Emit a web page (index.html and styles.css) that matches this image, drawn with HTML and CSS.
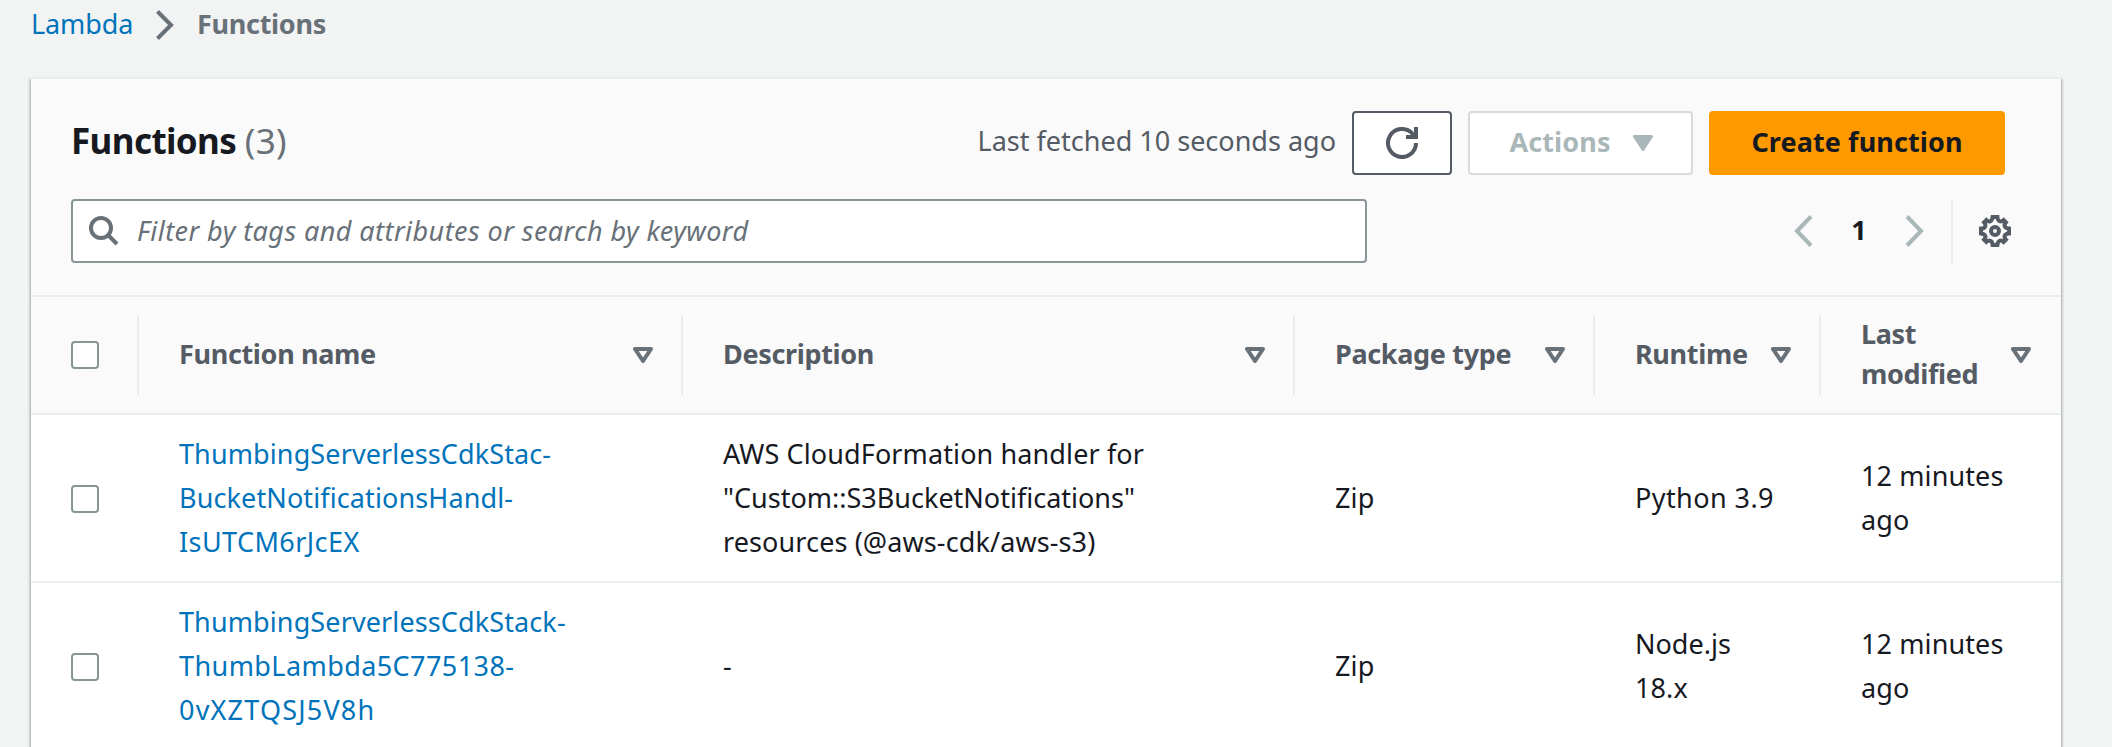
FILE: index.html
```html
<!DOCTYPE html>
<html lang="en">
<head>
<meta charset="utf-8">
<title>Functions - Lambda</title>
<link rel="stylesheet" href="styles.css">
</head>
<body>
<svg class="defs" width="0" height="0">
  <symbol id="sort" viewBox="0 0 20 16"><path d="M2 2h16L10 14z" fill="none" stroke="currentColor" stroke-width="4" stroke-linejoin="round"/></symbol>
</svg>
<nav class="crumbs">
  <a class="crumb-link">Lambda</a>
  <svg class="crumb-sep" viewBox="0 0 18 30"><path d="M1.500 1.500 15 15 1.500 28.500" fill="none" stroke="currentColor" stroke-width="4"/></svg>
  <span class="crumb-here">Functions</span>
</nav>
<main class="panel">
  <header class="head">
    <div class="title-row">
      <h1 class="title">Functions <span class="count">(3)</span></h1>
      <span class="fetched">Last fetched 10 seconds ago</span>
      <button class="btn btn-refresh" aria-label="Refresh"><svg class="icon" viewBox="0 0 32 32"><path d="M30 16a14 14 0 1 1-4-9.800L29 10M30 0v10H20" fill="none" stroke="currentColor" stroke-width="4"/></svg></button>
      <button class="btn btn-actions"><span>Actions</span><svg class="caret" viewBox="0 0 20 16"><path d="M1.500 1.500h17L10 14.500z" fill="currentColor" stroke="currentColor" stroke-width="3" stroke-linejoin="round"/></svg></button>
      <button class="btn btn-create"><span>Create function</span></button>
    </div>
    <div class="tools-row">
      <div class="search">
        <svg class="search-icon" viewBox="0 0 30 30"><circle cx="12" cy="12" r="10" fill="none" stroke="currentColor" stroke-width="4"/><path d="M19 19l9 9" stroke="currentColor" stroke-width="4"/></svg>
        <span class="placeholder">Filter by tags and attributes or search by keyword</span>
      </div>
      <div class="pager">
        <svg class="arrow" viewBox="0 0 20 32"><path d="M18 1.500 4 16l14 14.500" fill="none" stroke="currentColor" stroke-width="4"/></svg>
        <b class="page">1</b>
        <svg class="arrow" viewBox="0 0 20 32"><path d="M2 1.500 16 16 2 30.500" fill="none" stroke="currentColor" stroke-width="4"/></svg>
      </div>
      <button class="gear" aria-label="Settings"><svg class="icon" viewBox="0 0 32 32"><g fill="none" stroke="currentColor" stroke-width="4"><circle cx="16" cy="16" r="4"/><path d="M13.600 2h4.800q.2 3.400 2.200 4.200t4-1.100l2.300 2.300q-2 2.200-1.100 4t4.200 2.200v4.800q-3.400.2-4.200 2.200t1.100 4l-2.300 2.300q-2.200-2-4-1.100t-2.200 4.200h-4.800q-.2-3.400-2.200-4.200t-4 1.100l-2.300-2.300q2-2.200 1.100-4T2 18.400v-4.800q3.400-.2 4.200-2.200t-1.100-4l2.300-2.300q2.200 2 4 1.100T13.600 2z"/></g></svg></button>
    </div>
  </header>
  <div class="row row-head">
    <div class="cell"><span class="box"></span></div>
    <div class="cell"><span>Function name</span><svg class="sort"><use href="#sort"/></svg></div>
    <div class="cell"><span>Description</span><svg class="sort"><use href="#sort"/></svg></div>
    <div class="cell"><span>Package type</span><svg class="sort"><use href="#sort"/></svg></div>
    <div class="cell"><span>Runtime</span><svg class="sort"><use href="#sort"/></svg></div>
    <div class="cell"><span>Last<br>modified</span><svg class="sort"><use href="#sort"/></svg></div>
  </div>
  <div class="row">
    <div class="cell pick"><span class="box"></span></div>
    <div class="cell"><a class="fn">ThumbingServerlessCdkStac-<br>BucketNotificationsHandl-<br><span class="loose">IsUTCM6rJcEX</span></a></div>
    <div class="cell"><div>AWS CloudFormation handler for<br><span class="plain">"Custom::S3BucketNotifications"</span><br>resources (@aws-cdk/aws-s3)</div></div>
    <div class="cell">Zip</div>
    <div class="cell"><span class="loose">Python 3.9</span></div>
    <div class="cell"><div>12 minutes<br>ago</div></div>
  </div>
  <div class="row">
    <div class="cell pick"><span class="box"></span></div>
    <div class="cell"><a class="fn">ThumbingServerlessCdkStack-<br><span class="loose">ThumbLambda5C775138-</span><br><span class="looser">0vXZTQSJ5V8h</span></a></div>
    <div class="cell">-</div>
    <div class="cell">Zip</div>
    <div class="cell"><div><span class="plain">Node.js</span><br>18.x</div></div>
    <div class="cell"><div>12 minutes<br>ago</div></div>
  </div>
</main>
</body>
</html>
```

FILE: styles.css
```css
* { box-sizing: border-box; }
body { margin: 0; height: 747px; overflow: hidden; background: #f2f3f3; font: 27px/44px "Noto Sans", "Open Sans", sans-serif; color: #16191f; white-space: nowrap; }
svg { display: block; flex: none; }
.defs { position: absolute; }
.crumbs { display: flex; align-items: center; height: 77px; padding: 0 0 28px 31px; color: #687078; }
.crumb-link { color: #0073bb; width: 125px; margin-top: -1px; letter-spacing: -.1px; }
.crumb-sep { width: 18px; height: 30px; }
.crumb-here { font-weight: 700; margin: -1px 0 0 23px; letter-spacing: -.3px; }
.panel { width: 2030px; margin-left: 31px; border-top: 2px solid #eaeded; background: #fff; box-shadow: 0 2px 2px rgba(0,28,36,.3), 2px 2px 2px rgba(0,28,36,.15), -2px 2px 2px rgba(0,28,36,.15); }
.head { height: 218px; padding: 32px 40px 0; background: #fafafa; border-bottom: 2px solid #eaeded; }
.title-row, .tools-row { display: flex; align-items: center; height: 64px; }
.tools-row { margin-top: 24px; }
.title { margin: -5px auto 0 0; font-size: 35px; font-weight: 700; letter-spacing: -.6px; }
.count { font-weight: 400; color: #687078; letter-spacing: .4px; }
.fetched { color: #545b64; margin: -5px 16px 0 0; }
.btn { display: flex; align-items: center; justify-content: center; height: 64px; padding: 0; border: 2px solid #545b64; border-radius: 4px; background: #fff; color: #545b64; font: 700 27px/44px "Noto Sans", sans-serif; }
.btn span { margin-top: -2px; letter-spacing: .1px; }
.btn-refresh { width: 100px; }
.icon { width: 32px; height: 32px; }
.btn-actions { width: 225px; margin-left: 16px; padding-left: 1px; border-color: #d5dbdb; color: #aab7b8; gap: 22px; }
.caret { width: 20px; height: 16px; }
.btn-create { width: 296px; margin: 0 16px; background: #f90; border-color: #f90; color: #16191f; }
.search { display: flex; align-items: center; width: 1296px; height: 64px; padding-left: 16px; border: 2px solid #879596; border-radius: 4px; background: #fff; color: #687078; }
.search-icon { width: 30px; height: 30px; margin-right: 18px; }
.placeholder { font-style: italic; letter-spacing: .44px; }
.pager { display: flex; align-items: center; margin-left: auto; height: 64px; padding-right: 26px; border-right: 2px solid #eaeded; color: #aab7b8; }
.arrow { width: 20px; height: 32px; }
.page { width: 92px; margin-top: -2px; text-align: center; color: #16191f; }
.gear { padding: 0; margin: 0 10px 0 26px; border: 0; background: none; color: #545b64; }
.row { display: grid; grid-template-columns: 108px 544px 612px 300px 226px 240px; height: 168px; border-bottom: 2px solid #eaeded; letter-spacing: .11px; }
.cell { display: flex; align-items: center; padding-left: 40px; }
.pick { padding-top: 2px; }
.box { width: 28px; height: 28px; border: 2px solid #879596; border-radius: 4px; background: #fff; }
.fn { color: #0073bb; }
.plain { letter-spacing: 0; }
.loose { letter-spacing: .42px; }
.looser { letter-spacing: 1.2px; }
.row-head { height: 118px; padding: 18px 0; background: #fafafa; color: #545b64; font-weight: 700; line-height: 40px; letter-spacing: -.34px; }
.row-head .cell { justify-content: space-between; border-right: 2px solid #eaeded; padding-right: 28px; }
.row-head .cell > span:not(.box) { margin-top: -2px; }
.row-head .cell:last-child { border-right: 0; padding-right: 30px; }
.sort { width: 20px; height: 16px; color: #687078; }
```
